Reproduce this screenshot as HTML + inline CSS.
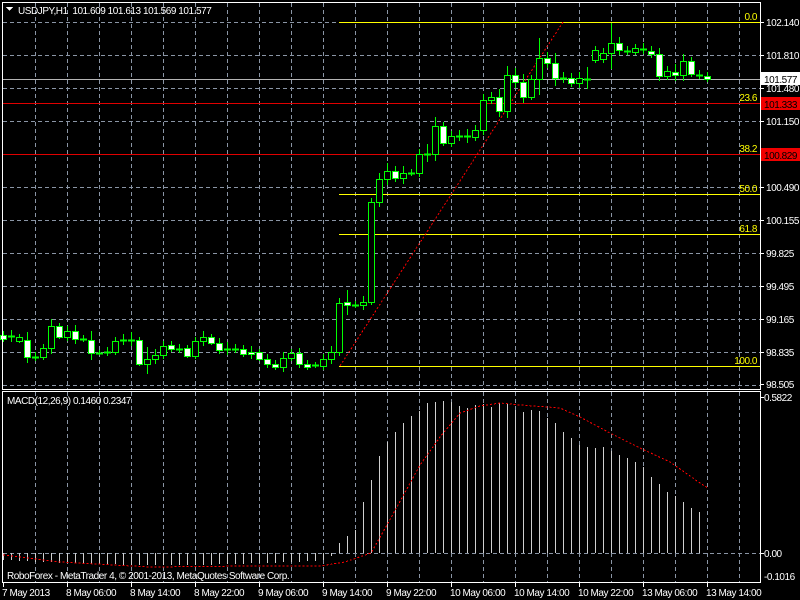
<!DOCTYPE html>
<html><head><meta charset="utf-8"><style>
html,body{margin:0;padding:0;background:#000;width:800px;height:600px;overflow:hidden}
svg{display:block}
text{font-family:"Liberation Sans",sans-serif;font-size:10px;letter-spacing:-0.45px;fill:#fff}
</style></head><body>
<svg id="s" width="800" height="600" xmlns="http://www.w3.org/2000/svg" shape-rendering="crispEdges">
<rect width="800" height="600" fill="#000"/>
<g id="grid" stroke="#8a95a5" stroke-dasharray="4,3" stroke-width="1"></g>
<line x1="2" y1="79.5" x2="760" y2="79.5" stroke="#b4b4b4"/>
<line x1="2" y1="103.5" x2="760" y2="103.5" stroke="#e00000"/>
<line x1="2" y1="154.5" x2="760" y2="154.5" stroke="#e00000"/>
<g stroke="#ffff00">
<line x1="339" y1="22.5" x2="760" y2="22.5"/>
<line x1="339" y1="194.5" x2="760" y2="194.5"/>
<line x1="339" y1="234.5" x2="760" y2="234.5"/>
<line x1="339" y1="366.5" x2="760" y2="366.5"/>
</g>
<line x1="340" y1="366" x2="563" y2="22" stroke="#ff0000" stroke-dasharray="2,2"/>
<g id="candles"></g>
<g id="macd"></g>
<polyline id="sig" fill="none" stroke="#ff0000" stroke-dasharray="2,2" points=""/>
<g stroke="#fff" fill="none">
<rect x="2.5" y="2.5" width="758" height="387"/>
<rect x="2.5" y="391.5" width="758" height="191"/>
</g>
<polygon points="6,7 13,7 9.5,11" fill="#fff"/>
<text x="18" y="14" xml:space="preserve">USDJPY,H1  101.609 101.613 101.569 101.577</text>
<text x="7" y="404">MACD(12,26,9) 0.1460 0.2347</text>
<text x="7" y="579">RoboForex - MetaTrader 4, © 2001-2013, MetaQuotes Software Corp.</text>
<g>
<text x="757" y="20" text-anchor="end" style="fill:#ffff00">0.0</text>
<text x="757" y="101" text-anchor="end" style="fill:#ffff00">23.6</text>
<text x="757" y="152" text-anchor="end" style="fill:#ffff00">38.2</text>
<text x="757" y="192" text-anchor="end" style="fill:#ffff00">50.0</text>
<text x="757" y="232" text-anchor="end" style="fill:#ffff00">61.8</text>
<text x="757" y="364" text-anchor="end" style="fill:#ffff00">100.0</text>
</g>
<g stroke="#fff">
<line x1="760" y1="22.5" x2="764" y2="22.5"/><line x1="760" y1="55.5" x2="764" y2="55.5"/>
<line x1="760" y1="88.5" x2="764" y2="88.5"/><line x1="760" y1="121.5" x2="764" y2="121.5"/>
<line x1="760" y1="187.5" x2="764" y2="187.5"/><line x1="760" y1="220.5" x2="764" y2="220.5"/>
<line x1="760" y1="253.5" x2="764" y2="253.5"/><line x1="760" y1="286.5" x2="764" y2="286.5"/>
<line x1="760" y1="319.5" x2="764" y2="319.5"/><line x1="760" y1="352.5" x2="764" y2="352.5"/>
<line x1="760" y1="384.5" x2="764" y2="384.5"/>
<line x1="760" y1="397.5" x2="764" y2="397.5"/><line x1="760" y1="553.5" x2="764" y2="553.5"/>
</g>
<text x="766" y="26">102.140</text>
<text x="766" y="59">101.810</text>
<text x="766" y="92">101.480</text>
<text x="766" y="125">101.150</text>
<text x="766" y="191">100.490</text>
<text x="766" y="224">100.155</text>
<text x="766" y="257">99.825</text>
<text x="766" y="290">99.495</text>
<text x="766" y="323">99.165</text>
<text x="766" y="356">98.835</text>
<text x="766" y="388">98.505</text>
<rect x="761" y="72" width="39" height="13" fill="#fff"/>
<text x="764" y="83" style="fill:#000">101.577</text>
<rect x="761" y="97" width="39" height="13" fill="#f00000"/>
<text x="764" y="108" style="fill:#000">101.333</text>
<rect x="761" y="148" width="39" height="13" fill="#f00000"/>
<text x="764" y="159" style="fill:#000">100.829</text>
<text x="764" y="401">0.5822</text>
<text x="764" y="557">0.00</text>
<text x="764" y="580">-0.1016</text>
<g id="tt" stroke="#fff"></g>
<text x="2" y="596">7 May 2013</text>
<text x="66" y="596">8 May 06:00</text>
<text x="130" y="596">8 May 14:00</text>
<text x="194" y="596">8 May 22:00</text>
<text x="258" y="596">9 May 06:00</text>
<text x="322" y="596">9 May 14:00</text>
<text x="386" y="596">9 May 22:00</text>
<text x="450" y="596">10 May 06:00</text>
<text x="514" y="596">10 May 14:00</text>
<text x="578" y="596">10 May 22:00</text>
<text x="642" y="596">13 May 06:00</text>
<text x="706" y="596">13 May 14:00</text>
</svg>
<script>
var NS="http://www.w3.org/2000/svg";
function el(p,t,a){var e=document.createElementNS(NS,t);for(var k in a)e.setAttribute(k,a[k]);p.appendChild(e);return e;}
var g=document.getElementById('grid');
for(var x=35;x<=739;x+=32){el(g,'line',{x1:x+.5,y1:3,x2:x+.5,y2:389});el(g,'line',{x1:x+.5,y1:392,x2:x+.5,y2:582});}
[22,55,88,121,154,187,220,253,286,319,352,385].forEach(function(y){el(g,'line',{x1:3,y1:y+.5,x2:760,y2:y+.5});});
el(g,'line',{x1:3,y1:553.5,x2:760,y2:553.5});
var tt=document.getElementById('tt');
for(var x=3;x<=740;x+=64){el(tt,'line',{x1:x+.5,y1:583,x2:x+.5,y2:587});}
var C=[[335,339],[337,336],[341,337],[340,357],[357,357],[357,348],[348,326],[326,337],[337,331],[331,339],[339,339],[340,353],[353,353],[352,352],[352,341],[340,340],[340,340],[340,364],[364,359],[359,355],[355,346],[345,349],[349,349],[348,356],[356,341],[341,337],[337,343],[343,350],[349,349],[349,349],[349,354],[352,354],[352,359],[359,364],[364,367],[367,358],[358,353],[353,364],[364,367],[365,366],[366,359],[359,352],[352,303],[302,305],[305,305],[305,302],
[302,202],[202,179],[179,171],[171,178],[178,173],[173,173],[173,154],[154,154],[154,126],[126,143],[143,136],[136,136],[136,137],[137,130],[130,100],[100,97],[97,111],[111,75],[75,82],[82,97],[97,79],[79,58],[58,63],[63,78],[78,78],[78,83],[83,78],[79,79],[60,50],[59,53],[53,43],[43,50],[51,51],[52,48],[49,49],[51,54],[54,76],[76,71],[72,75],[75,61],[61,74],[75,75],[76,79]];
var W=[4,6,3,8,5,4,7,3,5,6,4,9,3,5,4,6,8,3,12,6,5,4,5,3,4,6,3,5,7,5,4,6,3,5,4,6,4,5,4,3,5,6,5,12,4,6,4,6,8,5,7,4,5,10,9,4,5,6,7,5,6,5,8,9,7,8,4,20,6,10,6,5,6,12,4,5,20,6,5,4,6,5,6,5,8,7,4,5,4];
var cg=document.getElementById('candles');
C.forEach(function(c,i){var cx=3+8*i,o=c[0],cl=c[1],t=Math.min(o,cl),b=Math.max(o,cl),w=W[i%W.length];
 el(cg,'line',{x1:cx+.5,y1:t-w,x2:cx+.5,y2:b+Math.round(w*.8),stroke:'#00ff00'});
 if(b-t<2){el(cg,'line',{x1:cx-3,y1:t+.5,x2:cx+4,y2:t+.5,stroke:'#00ff00','stroke-width':2});}
 else el(cg,'rect',{x:cx-2.5,y:t+.5,width:6,height:b-t,fill:(cl<o?'#000':'#fff'),stroke:'#00ff00'});
});
var M=[];for(var i=0;i<42;i++){M.push(553+Math.round(7+5*Math.sin(i/41*Math.PI)));}
M[40]=560;M[41]=556;
M=M.concat([543,536,530,502,480,456,442,432,423,416,411,403,402,401,402,406,408,405,404,407,403,404,410,412,410,411,418,423,432,438,445,447,448,447,451,455,458,462,467,477,484,492,496,502,508,512]);
var mg=document.getElementById('macd');
M.forEach(function(y,i){var x=3+8*i;el(mg,'line',{x1:x+.5,y1:Math.min(y,553),x2:x+.5,y2:Math.max(y,553),stroke:'#d0d0d0'});});
var S=[[3,555],[60,562],[150,567],[250,566],[320,566],[345,562],[371,553],[387,525],[420,465],[440,437],[460,413],[480,406],[500,403],[520,405],[547,407],[560,408],[580,417],[610,433],[640,448],[670,462],[700,483],[708,488]];
document.getElementById('sig').setAttribute('points',S.map(function(p){return p.join(',')}).join(' '));
</script>
</body></html>
